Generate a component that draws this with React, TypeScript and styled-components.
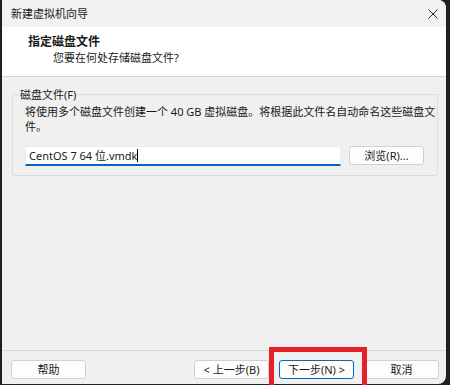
import styled, { createGlobalStyle } from 'styled-components';

const GlobalStyle = createGlobalStyle`
    html, body {
        margin: 0;
        padding: 0;
        background: #1f1f1f;
    }
    body {
        font-family: "Noto Sans", "Noto Sans CJK SC", sans-serif;
        color: #1a1a1a;
    }
`

function CloseIcon () {
    return (
        <svg width="10" height="10" viewBox="0 0 10 10">
            <path d="M0.5 0.5 L9.5 9.5 M9.5 0.5 L0.5 9.5" stroke="#2b2b2b" strokeWidth="1" fill="none"/>
        </svg>
    )
}

function App () {
    return (
        <Screen>
            <GlobalStyle/>
            <Window>
                <TitleBar>
                    <TitleText>新建虚拟机向导</TitleText>
                    <CloseIcon/>
                </TitleBar>

                <Header>
                    <Heading>指定磁盘文件</Heading>
                    <SubHeading>您要在何处存储磁盘文件?</SubHeading>
                </Header>

                <Body>
                    <GroupBox>
                        <GroupLabel>磁盘文件(F)</GroupLabel>
                        <Description>
                            将使用多个磁盘文件创建一个 40 GB 虚拟磁盘。将根据此文件名自动命名这些磁盘文<br/>件。
                        </Description>
                        <InputRow>
                            <FileInput>
                                CentOS 7 64 位.vmdk<Caret/>
                            </FileInput>
                            <Button>浏览(R)...</Button>
                        </InputRow>
                    </GroupBox>
                </Body>

                <Footer>
                    <Button>帮助</Button>
                    <NavGroup>
                        <Button>&lt; 上一步(B)</Button>
                        <Button $primary>下一步(N) &gt;</Button>
                        <Button>取消</Button>
                    </NavGroup>
                </Footer>
            </Window>
            <Highlight/>
        </Screen>
    )
}

const Screen = styled.div`
    position: relative;
    width: 450px;
    height: 385px;
    padding-left: 2px;
    box-sizing: border-box;
    overflow: hidden;
`
const Window = styled.div`
    width: 444px;
    height: 384px;
    background: #f0f0f0;
    border-radius: 0 8px 8px 0;
    overflow: hidden;
    display: flex;
    flex-direction: column;
`
const TitleBar = styled.div`
    height: 27px;
    flex: none;
    display: flex;
    align-items: center;
    justify-content: space-between;
    padding: 0 8px 0 9px;
    background: #f2f2f2;
`
const TitleText = styled.span`
    font-size: 11px;
    line-height: 14px;
`
const Header = styled.div`
    height: 50px;
    flex: none;
    background: #ffffff;
    border-bottom: 1px solid #d5d5d5;
    box-sizing: border-box;
    padding: 7px 0 0 26px;
    display: flex;
    flex-direction: column;
    gap: 1px;
`
const Heading = styled.div`
    font-size: 12px;
    font-weight: bold;
    line-height: 15px;
`
const SubHeading = styled.div`
    font-size: 11px;
    line-height: 15px;
    padding-left: 25px;
`
const Body = styled.div`
    flex: 1;
    padding: 10px 8px 0 10px;
`
const GroupBox = styled.fieldset`
    margin: 0;
    padding: 0 12px 9px 12px;
    border: 1px solid #dcdcdc;
    border-radius: 2px;
    min-width: 0;
`
const GroupLabel = styled.legend`
    font-size: 11px;
    line-height: 15px;
    padding: 0 2px;
    margin-left: -7px;
`
const Description = styled.div`
    margin-top: 2px;
    font-size: 11px;
    line-height: 15px;
    white-space: nowrap;
`
const InputRow = styled.div`
    margin-top: 12px;
    display: flex;
    align-items: flex-start;
    gap: 8px;
`
const FileInput = styled.div`
    width: 316px;
    height: 20px;
    box-sizing: border-box;
    background: #ffffff;
    border: 1px solid #ececec;
    border-bottom: 2px solid #0067c0;
    border-radius: 2px 2px 0 0;
    padding: 0 3px;
    font-size: 11px;
    line-height: 18px;
    display: flex;
    align-items: center;
`
const Caret = styled.span`
    display: inline-block;
    width: 1px;
    height: 13px;
    background: #000;
`
const Button = styled.button<{ $primary?: boolean }>`
    width: 75px;
    height: 19px;
    box-sizing: border-box;
    padding: 0;
    background: #fdfdfd;
    border: 1px solid ${p => p.$primary ? '#0067c0' : '#d0d0d0'};
    border-radius: 3px;
    font-family: inherit;
    font-size: 11px;
    line-height: 17px;
    color: #1a1a1a;
`
const Footer = styled.div`
    height: 34px;
    flex: none;
    border-top: 1px solid #d8d8d8;
    box-sizing: border-box;
    padding: 9px 7px 0 9px;
    display: flex;
    justify-content: space-between;
    align-items: flex-start;
`
const NavGroup = styled.div`
    display: flex;
    gap: 10px;
`
const Highlight = styled.div`
    position: absolute;
    left: 269px;
    top: 347px;
    width: 98px;
    height: 48px;
    box-sizing: border-box;
    border: 5px solid #e5202a;
`

export default App;
